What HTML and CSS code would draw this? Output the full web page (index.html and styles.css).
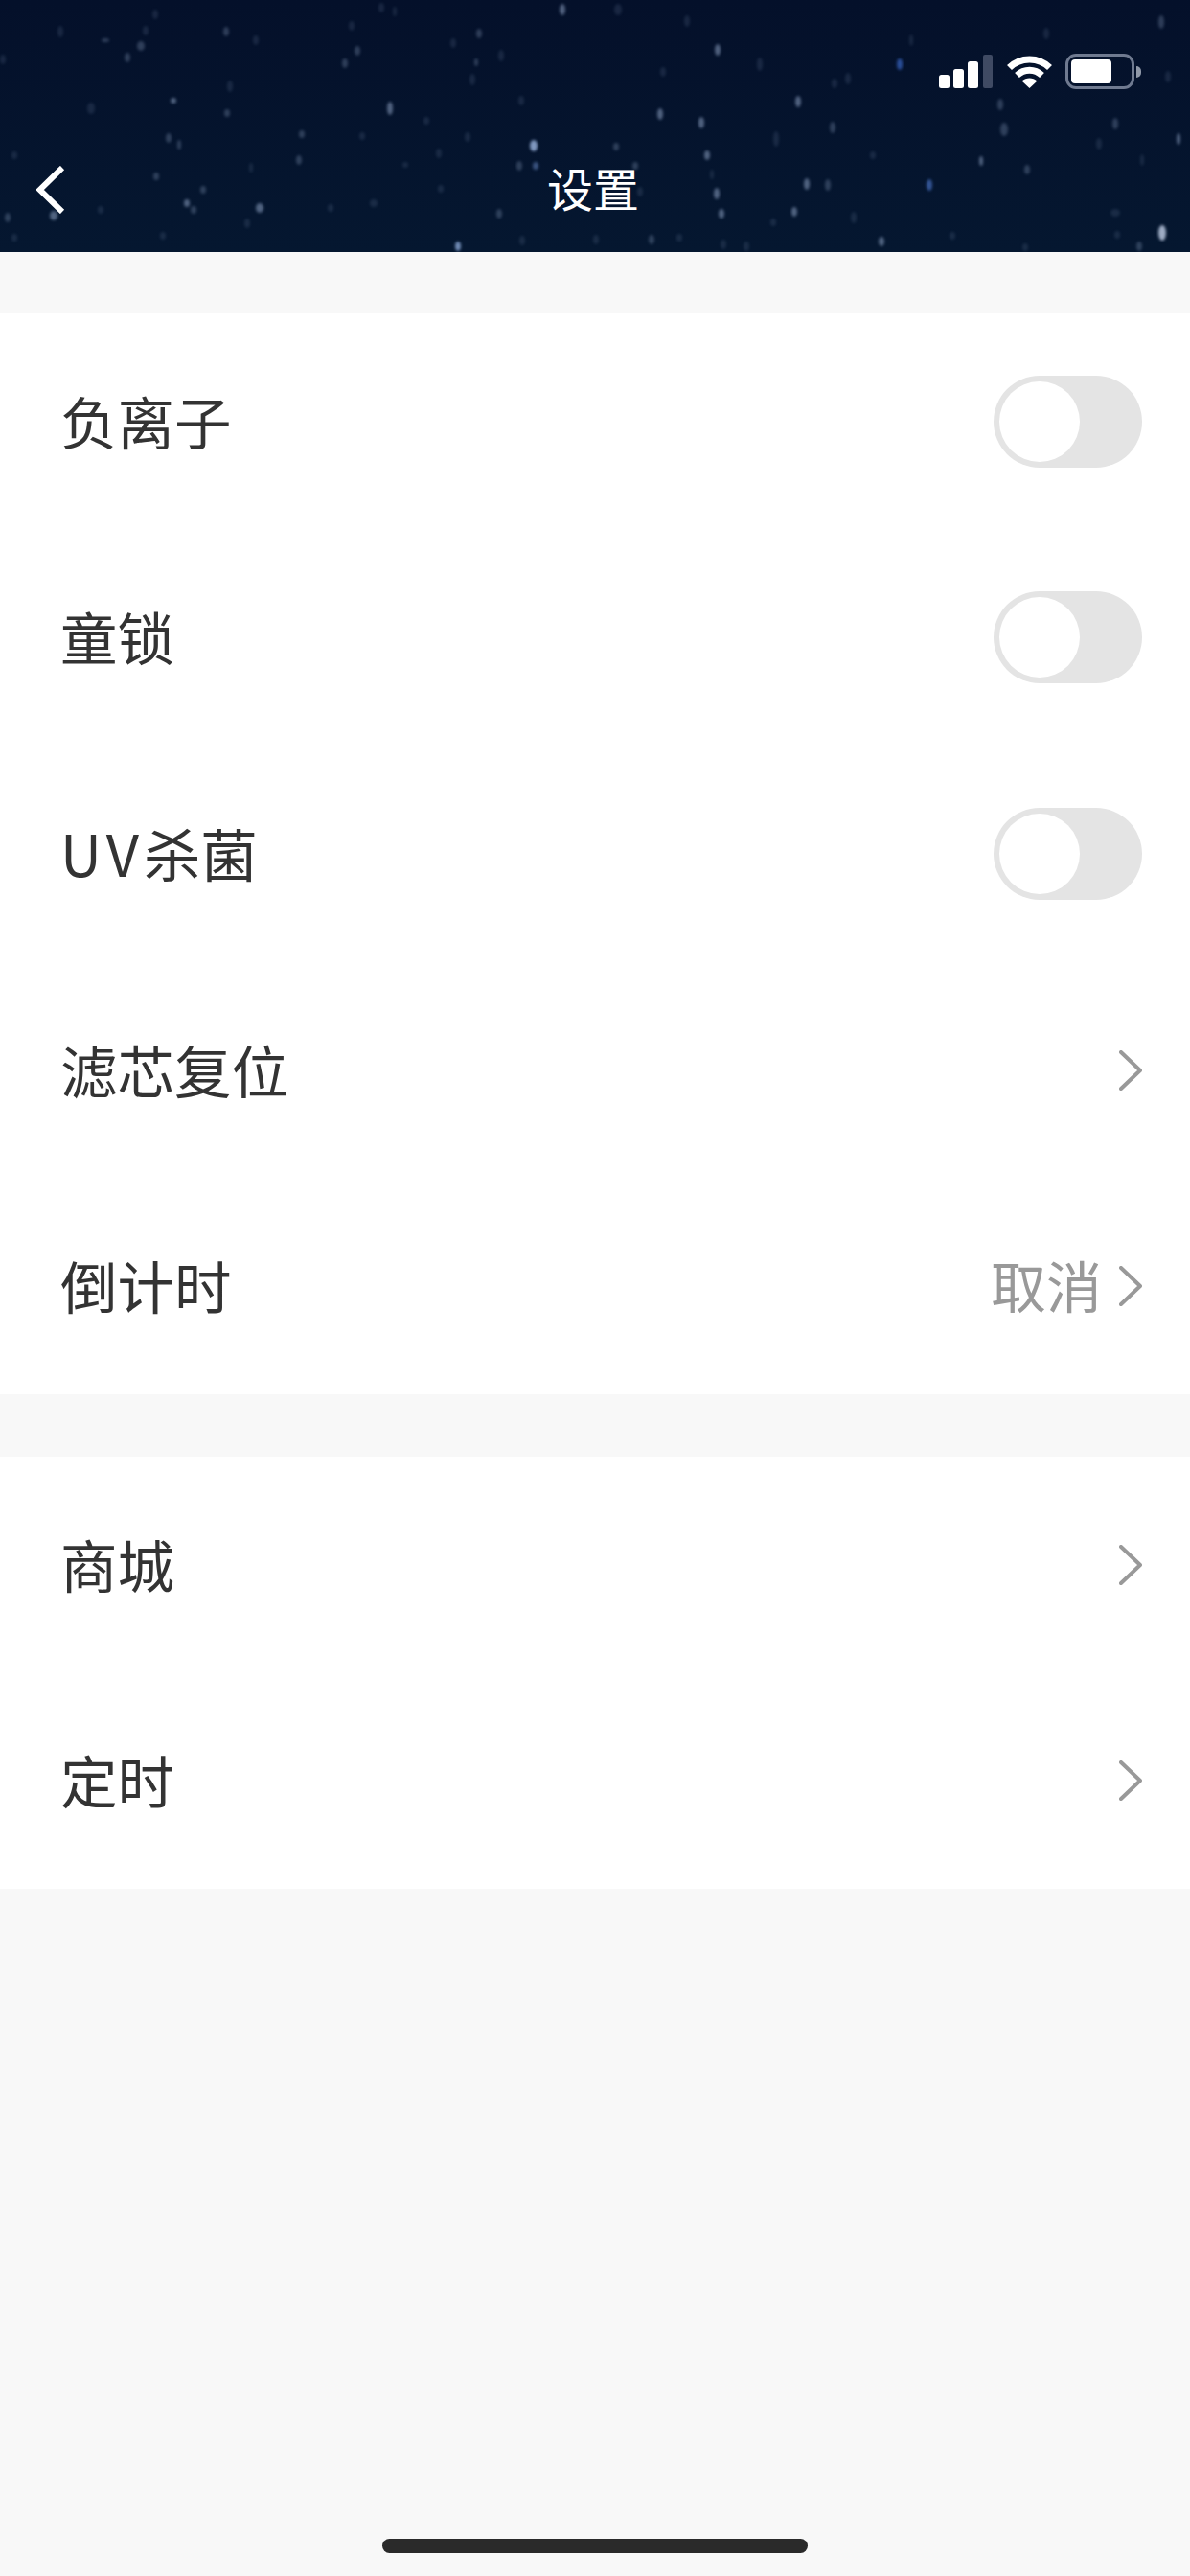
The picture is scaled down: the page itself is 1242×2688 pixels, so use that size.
FILE: index.html
```html
<!DOCTYPE html>
<html lang="zh-CN">
<head>
  <meta charset="UTF-8">
  <title>设置</title>
  <link rel="stylesheet" href="styles.css">
</head>
<body>
  <div class="page">

    <!-- Header -->
    <header class="header">
      <svg class="stars" width="1242" height="263" viewBox="0 0 1242 263" fill="#9db2d4">
        <!-- faint -->
        <g opacity=".14">
          <ellipse cx="63" cy="33" rx="3" ry="6"/><ellipse cx="162" cy="15" rx="3" ry="5"/>
          <ellipse cx="152" cy="32" rx="3" ry="5"/><ellipse cx="267" cy="42" rx="3" ry="5"/>
          <ellipse cx="367" cy="27" rx="3" ry="5"/><ellipse cx="398" cy="8" rx="3" ry="5"/>
          <ellipse cx="412" cy="12" rx="2" ry="5"/><ellipse cx="3" cy="62" rx="3" ry="5"/>
          <ellipse cx="95" cy="113" rx="4" ry="6"/><ellipse cx="240" cy="90" rx="3" ry="6"/>
          <ellipse cx="378" cy="142" rx="3" ry="4"/><ellipse cx="15" cy="162" rx="3" ry="4"/>
          <ellipse cx="262" cy="175" rx="2" ry="5"/><ellipse cx="105" cy="219" rx="3" ry="4"/>
          <ellipse cx="258" cy="233" rx="3" ry="5"/><ellipse cx="170" cy="246" rx="3" ry="4"/>
          <ellipse cx="390" cy="212" rx="4" ry="4"/><ellipse cx="345" cy="217" rx="3" ry="4"/>
          <ellipse cx="15" cy="248" rx="3" ry="4"/><ellipse cx="645" cy="10" rx="4" ry="6"/>
          <ellipse cx="717" cy="22" rx="3" ry="6"/><ellipse cx="793" cy="67" rx="3" ry="7"/>
          <ellipse cx="473" cy="45" rx="3" ry="5"/><ellipse cx="523" cy="58" rx="3" ry="6"/>
          <ellipse cx="692" cy="75" rx="3" ry="5"/><ellipse cx="493" cy="83" rx="3" ry="6"/>
          <ellipse cx="544" cy="105" rx="3" ry="5"/><ellipse cx="445" cy="126" rx="3" ry="4"/>
          <ellipse cx="488" cy="143" rx="3" ry="5"/><ellipse cx="458" cy="160" rx="3" ry="5"/>
          <ellipse cx="810" cy="145" rx="3" ry="8"/><ellipse cx="743" cy="182" rx="2" ry="5"/>
          <ellipse cx="460" cy="197" rx="3" ry="4"/><ellipse cx="668" cy="200" rx="3" ry="5"/>
          <ellipse cx="622" cy="250" rx="3" ry="5"/><ellipse cx="709" cy="248" rx="3" ry="4"/>
          <ellipse cx="755" cy="255" rx="3" ry="5"/><ellipse cx="779" cy="257" rx="3" ry="5"/>
          <ellipse cx="545" cy="251" rx="3" ry="5"/><ellipse cx="807" cy="232" rx="3" ry="4"/>
          <ellipse cx="423" cy="172" rx="3" ry="3"/><ellipse cx="1092" cy="35" rx="3" ry="6"/>
          <ellipse cx="951" cy="42" rx="2" ry="6"/><ellipse cx="885" cy="82" rx="3" ry="6"/>
          <ellipse cx="871" cy="87" rx="3" ry="5"/><ellipse cx="1219" cy="80" rx="3" ry="6"/>
          <ellipse cx="1147" cy="150" rx="3" ry="6"/><ellipse cx="911" cy="162" rx="3" ry="4"/>
          <ellipse cx="1192" cy="167" rx="2" ry="6"/><ellipse cx="891" cy="227" rx="3" ry="6"/>
          <ellipse cx="1164" cy="222" rx="5" ry="4"/><ellipse cx="1166" cy="245" rx="3" ry="4"/>
          <ellipse cx="1070" cy="258" rx="3" ry="4"/><ellipse cx="994" cy="246" rx="3" ry="4"/>
        </g>
        <!-- medium -->
        <g opacity=".28">
          <ellipse cx="110" cy="42" rx="4" ry="2"/><ellipse cx="147" cy="48" rx="4" ry="5"/>
          <ellipse cx="133" cy="60" rx="3" ry="5"/><ellipse cx="236" cy="33" rx="3" ry="5"/>
          <ellipse cx="373" cy="53" rx="3" ry="5"/><ellipse cx="360" cy="66" rx="3" ry="5"/>
          <ellipse cx="237" cy="118" rx="3" ry="4"/><ellipse cx="315" cy="140" rx="3" ry="4"/>
          <ellipse cx="176" cy="144" rx="3" ry="5"/><ellipse cx="187" cy="151" rx="2" ry="5"/>
          <ellipse cx="312" cy="167" rx="3" ry="5"/><ellipse cx="163" cy="184" rx="3" ry="4"/>
          <ellipse cx="212" cy="198" rx="3" ry="4"/><ellipse cx="202" cy="219" rx="3" ry="4"/>
          <ellipse cx="8" cy="227" rx="3" ry="5"/><ellipse cx="500" cy="35" rx="3" ry="5"/>
          <ellipse cx="497" cy="65" rx="2" ry="4"/><ellipse cx="643" cy="153" rx="3" ry="4"/>
          <ellipse cx="542" cy="173" rx="3" ry="5"/><ellipse cx="663" cy="173" rx="3" ry="4"/>
          <ellipse cx="521" cy="223" rx="3" ry="5"/><ellipse cx="680" cy="250" rx="3" ry="5"/>
          <ellipse cx="869" cy="133" rx="3" ry="6"/><ellipse cx="1044" cy="109" rx="3" ry="6"/>
          <ellipse cx="1048" cy="135" rx="4" ry="7"/><ellipse cx="1164" cy="129" rx="3" ry="6"/>
          <ellipse cx="864" cy="193" rx="3" ry="6"/><ellipse cx="1072" cy="177" rx="3" ry="5"/>
          <ellipse cx="1189" cy="257" rx="3" ry="5"/><ellipse cx="1212" cy="23" rx="3" ry="7"/>
        </g>
        <!-- bright -->
        <g opacity=".5">
          <ellipse cx="195" cy="212" rx="3" ry="4"/><ellipse cx="271" cy="217" rx="4" ry="5"/>
          <ellipse cx="181" cy="105" rx="3" ry="3"/><ellipse cx="407" cy="113" rx="3" ry="7"/>
          <ellipse cx="587" cy="10" rx="3" ry="6"/><ellipse cx="749" cy="52" rx="3" ry="6"/>
          <ellipse cx="833" cy="106" rx="3" ry="6"/><ellipse cx="689" cy="119" rx="3" ry="6"/>
          <ellipse cx="732" cy="128" rx="3" ry="6"/><ellipse cx="738" cy="162" rx="3" ry="5"/>
          <ellipse cx="748" cy="202" rx="3" ry="6"/><ellipse cx="753" cy="223" rx="3" ry="5"/>
          <ellipse cx="829" cy="221" rx="3" ry="5"/><ellipse cx="842" cy="192" rx="3" ry="6"/>
          <ellipse cx="920" cy="252" rx="3" ry="5"/><ellipse cx="1024" cy="168" rx="2" ry="5"/>
          <ellipse cx="1230" cy="145" rx="2" ry="6"/><ellipse cx="56" cy="225" rx="4" ry="5"/>
        </g>
        <ellipse cx="1213" cy="243" rx="4" ry="8" fill="#c4d2ea" opacity=".8"/>
        <ellipse cx="557" cy="152" rx="4" ry="6" fill="#a9c4f0" opacity=".75"/>
        <ellipse cx="559" cy="173" rx="3" ry="4" fill="#6d8fd0" opacity=".5"/>
        <ellipse cx="478" cy="257" rx="3" ry="5" fill="#9fbdf0" opacity=".7"/>
        <ellipse cx="939" cy="67" rx="3" ry="6" fill="#3a68c8" opacity=".7"/>
        <ellipse cx="970" cy="193" rx="3" ry="6" fill="#4f7ad0" opacity=".65"/>
      </svg>

      <div class="status-bar">
        <svg class="signal" width="56" height="35" viewBox="0 0 56 35">
          <rect x="0" y="21" width="11" height="14" rx="2.5" fill="#fff"/>
          <rect x="15" y="15" width="11" height="20" rx="2.5" fill="#fff"/>
          <rect x="30" y="7" width="11" height="28" rx="2.5" fill="#fff"/>
          <rect x="46" y="0" width="10" height="35" rx="2" fill="#3f4a63"/>
        </svg>
        <svg class="wifi" width="47" height="35" viewBox="0 0 47 35">
          <path d="M2.500 13.500 C14 2 33 2 44.500 13.500" fill="none" stroke="#fff" stroke-width="7"/>
          <path d="M10.500 21.500 C18 14.500 29 14.500 36.500 21.500" fill="none" stroke="#fff" stroke-width="7"/>
          <path d="M15.500 27.500 C20 23.500 27 23.500 31.500 27.500 L23.500 35 Z" fill="#fff"/>
        </svg>
        <div class="battery">
          <div class="battery-level"></div>
        </div>
        <div class="battery-nub"></div>
      </div>

      <div class="nav">
        <svg class="back" width="30" height="50" viewBox="0 0 30 50">
          <path d="M27 2 L3.500 25 L27 48" fill="none" stroke="#fff" stroke-width="6"/>
        </svg>
        <div class="nav-title">设置</div>
      </div>
    </header>

    <!-- Device settings -->
    <section class="group">
      <div class="row">
        <span class="label">负离子</span>
        <div class="switch"><div class="knob"></div></div>
      </div>
      <div class="row">
        <span class="label">童锁</span>
        <div class="switch"><div class="knob"></div></div>
      </div>
      <div class="row">
        <span class="label"><span class="latin">UV</span>杀菌</span>
        <div class="switch"><div class="knob"></div></div>
      </div>
      <div class="row">
        <span class="label">滤芯复位</span>
        <svg class="chevron" width="24" height="42" viewBox="0 0 24 42"><path d="M2 2 L22 21 L2 40"/></svg>
      </div>
      <div class="row">
        <span class="label">倒计时</span>
        <div class="row-right">
          <span class="value">取消</span>
          <svg class="chevron" width="24" height="42" viewBox="0 0 24 42"><path d="M2 2 L22 21 L2 40"/></svg>
        </div>
      </div>
    </section>

    <!-- Links -->
    <section class="group">
      <div class="row">
        <span class="label">商城</span>
        <svg class="chevron" width="24" height="42" viewBox="0 0 24 42"><path d="M2 2 L22 21 L2 40"/></svg>
      </div>
      <div class="row">
        <span class="label">定时</span>
        <svg class="chevron" width="24" height="42" viewBox="0 0 24 42"><path d="M2 2 L22 21 L2 40"/></svg>
      </div>
    </section>

    <div class="home-bar"></div>
  </div>
</body>
</html>
```

FILE: styles.css
```css
body {
  margin: 0;
  background-color: #f8f8f8;
  color: #333;
  font-family: "Noto Sans CJK SC", "Noto Sans", sans-serif;
}

.page {
  display: flex;
  flex-direction: column;
  height: 2688px;
  overflow: hidden;
}

.header {
  position: relative;
  box-sizing: border-box;
  height: 263px;
  padding-top: 56px;
  overflow: hidden;
  background: linear-gradient(#04102a, #051730);
}

.stars {
  position: absolute;
  top: 0;
  left: 0;
  filter: blur(1.5px);
}

.status-bar {
  position: relative;
  display: flex;
  align-items: center;
  justify-content: flex-end;
  height: 37px;
  padding-right: 51px;
}

.wifi {
  margin-left: 15px;
}

.battery {
  box-sizing: border-box;
  width: 72px;
  height: 37px;
  margin-left: 14px;
  padding: 3px;
  border: 3px solid #6f7a90;
  border-radius: 11px;
}

.battery-level {
  width: 42px;
  height: 25px;
  background-color: #fff;
  border-radius: 4px;
}

.battery-nub {
  width: 5px;
  height: 12px;
  margin-left: 2px;
  background-color: #8f98a8;
  border-radius: 0 6px 6px 0;
}

.nav {
  position: relative;
  display: flex;
  align-items: center;
  justify-content: center;
  height: 50px;
  margin-top: 80px;
}

.back {
  position: absolute;
  left: 38px;
  top: 0;
}

.nav-title {
  margin: 0 4px 6px 0;
  color: #fff;
  font-size: 48px;
  line-height: 50px;
}

.group {
  margin-top: 64px;
  background-color: #fff;
}

.group + .group {
  margin-top: 65px;
}

.row {
  display: flex;
  align-items: center;
  justify-content: space-between;
  height: 225.6px;
  padding: 0 50px 0 63px;
}

.label {
  margin-bottom: 4px;
  font-size: 59.5px;
}

.latin {
  letter-spacing: 5px;
}

.row-right {
  display: flex;
  align-items: center;
}

.value {
  margin: 0 18px 4px 0;
  color: #999;
  font-size: 58px;
}

.switch {
  box-sizing: border-box;
  width: 155px;
  height: 96px;
  padding: 6px;
  background-color: #e4e4e4;
  border-radius: 48px;
}

.knob {
  width: 84px;
  height: 84px;
  background-color: #fff;
  border-radius: 50%;
}

.chevron {
  fill: none;
  stroke: #999;
  stroke-width: 4;
  stroke-linecap: round;
  stroke-linejoin: round;
}

.home-bar {
  width: 444px;
  height: 15px;
  margin: auto auto 24px;
  background-color: #2a2a2a;
  border-radius: 8px;
}
```
